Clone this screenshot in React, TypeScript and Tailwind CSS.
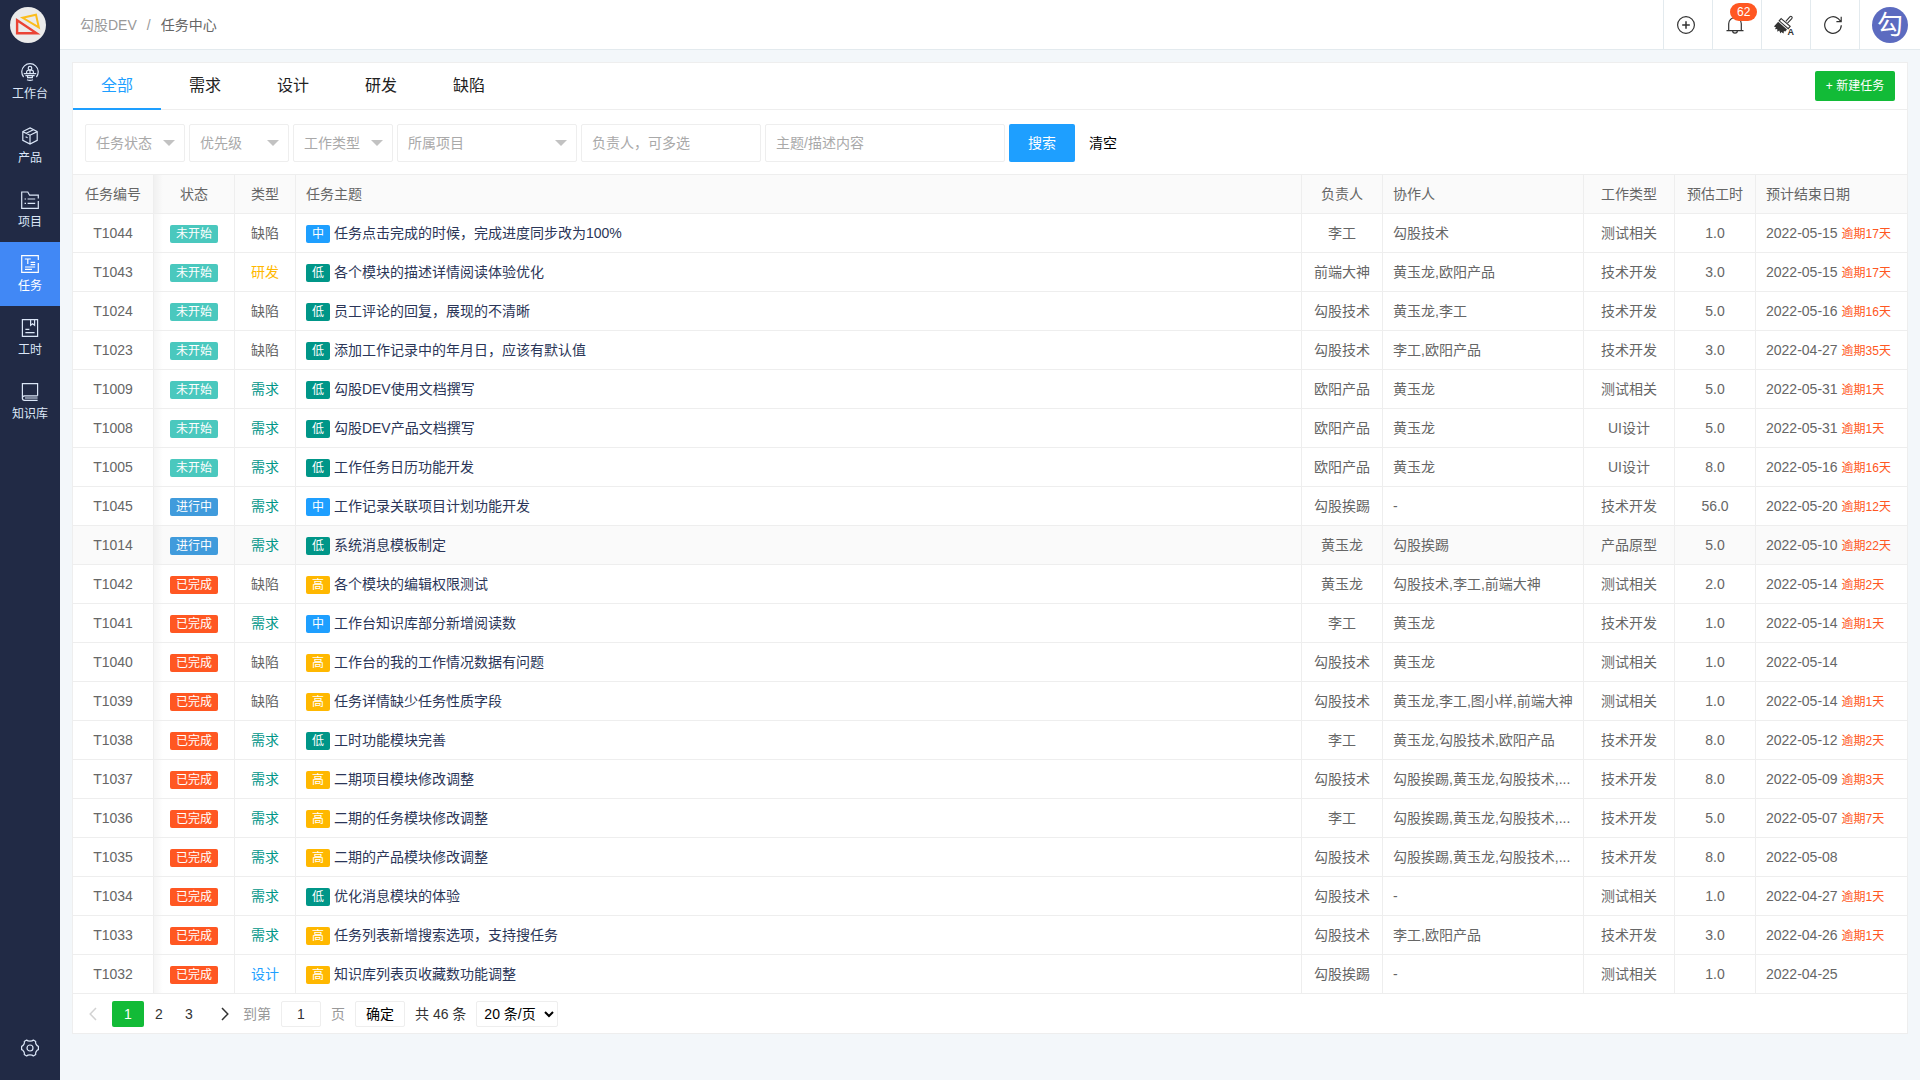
import React, { useState } from "react";

interface Task {
  id: string;
  status: string;
  type: string;
  level: string;
  title: string;
  owner: string;
  helpers: string;
  work: string;
  hours: string;
  date: string;
  overdue?: number;
}

const statusColor: Record<string, string> = {
  未开始: "bg-[#4ac8be]",
  进行中: "bg-[#409bdc]",
  已完成: "bg-[#ff5722]",
};

const levelColor: Record<string, string> = {
  低: "bg-[#009688]",
  中: "bg-[#1e9fff]",
  高: "bg-[#ffb800]",
};

const typeColor: Record<string, string> = {
  缺陷: "text-[#666]",
  研发: "text-[#ffb800]",
  需求: "text-[#009688]",
  设计: "text-[#1e9fff]",
};

const tasks: Task[] = [
  { id: "T1044", status: "未开始", type: "缺陷", level: "中", title: "任务点击完成的时候，完成进度同步改为100%", owner: "李工", helpers: "勾股技术", work: "测试相关", hours: "1.0", date: "2022-05-15", overdue: 17 },
  { id: "T1043", status: "未开始", type: "研发", level: "低", title: "各个模块的描述详情阅读体验优化", owner: "前端大神", helpers: "黄玉龙,欧阳产品", work: "技术开发", hours: "3.0", date: "2022-05-15", overdue: 17 },
  { id: "T1024", status: "未开始", type: "缺陷", level: "低", title: "员工评论的回复，展现的不清晰", owner: "勾股技术", helpers: "黄玉龙,李工", work: "技术开发", hours: "5.0", date: "2022-05-16", overdue: 16 },
  { id: "T1023", status: "未开始", type: "缺陷", level: "低", title: "添加工作记录中的年月日，应该有默认值", owner: "勾股技术", helpers: "李工,欧阳产品", work: "技术开发", hours: "3.0", date: "2022-04-27", overdue: 35 },
  { id: "T1009", status: "未开始", type: "需求", level: "低", title: "勾股DEV使用文档撰写", owner: "欧阳产品", helpers: "黄玉龙", work: "测试相关", hours: "5.0", date: "2022-05-31", overdue: 1 },
  { id: "T1008", status: "未开始", type: "需求", level: "低", title: "勾股DEV产品文档撰写", owner: "欧阳产品", helpers: "黄玉龙", work: "UI设计", hours: "5.0", date: "2022-05-31", overdue: 1 },
  { id: "T1005", status: "未开始", type: "需求", level: "低", title: "工作任务日历功能开发", owner: "欧阳产品", helpers: "黄玉龙", work: "UI设计", hours: "8.0", date: "2022-05-16", overdue: 16 },
  { id: "T1045", status: "进行中", type: "需求", level: "中", title: "工作记录关联项目计划功能开发", owner: "勾股挨踢", helpers: "-", work: "技术开发", hours: "56.0", date: "2022-05-20", overdue: 12 },
  { id: "T1014", status: "进行中", type: "需求", level: "低", title: "系统消息模板制定", owner: "黄玉龙", helpers: "勾股挨踢", work: "产品原型", hours: "5.0", date: "2022-05-10", overdue: 22 },
  { id: "T1042", status: "已完成", type: "缺陷", level: "高", title: "各个模块的编辑权限测试", owner: "黄玉龙", helpers: "勾股技术,李工,前端大神", work: "测试相关", hours: "2.0", date: "2022-05-14", overdue: 2 },
  { id: "T1041", status: "已完成", type: "需求", level: "中", title: "工作台知识库部分新增阅读数", owner: "李工", helpers: "黄玉龙", work: "技术开发", hours: "1.0", date: "2022-05-14", overdue: 1 },
  { id: "T1040", status: "已完成", type: "缺陷", level: "高", title: "工作台的我的工作情况数据有问题", owner: "勾股技术", helpers: "黄玉龙", work: "测试相关", hours: "1.0", date: "2022-05-14" },
  { id: "T1039", status: "已完成", type: "缺陷", level: "高", title: "任务详情缺少任务性质字段", owner: "勾股技术", helpers: "黄玉龙,李工,图小样,前端大神", work: "测试相关", hours: "1.0", date: "2022-05-14", overdue: 1 },
  { id: "T1038", status: "已完成", type: "需求", level: "低", title: "工时功能模块完善", owner: "李工", helpers: "黄玉龙,勾股技术,欧阳产品", work: "技术开发", hours: "8.0", date: "2022-05-12", overdue: 2 },
  { id: "T1037", status: "已完成", type: "需求", level: "高", title: "二期项目模块修改调整", owner: "勾股技术", helpers: "勾股挨踢,黄玉龙,勾股技术,...", work: "技术开发", hours: "8.0", date: "2022-05-09", overdue: 3 },
  { id: "T1036", status: "已完成", type: "需求", level: "高", title: "二期的任务模块修改调整", owner: "李工", helpers: "勾股挨踢,黄玉龙,勾股技术,...", work: "技术开发", hours: "5.0", date: "2022-05-07", overdue: 7 },
  { id: "T1035", status: "已完成", type: "需求", level: "高", title: "二期的产品模块修改调整", owner: "勾股技术", helpers: "勾股挨踢,黄玉龙,勾股技术,...", work: "技术开发", hours: "8.0", date: "2022-05-08" },
  { id: "T1034", status: "已完成", type: "需求", level: "低", title: "优化消息模块的体验", owner: "勾股技术", helpers: "-", work: "测试相关", hours: "1.0", date: "2022-04-27", overdue: 1 },
  { id: "T1033", status: "已完成", type: "需求", level: "高", title: "任务列表新增搜索选项，支持搜任务", owner: "勾股技术", helpers: "李工,欧阳产品", work: "技术开发", hours: "3.0", date: "2022-04-26", overdue: 1 },
  { id: "T1032", status: "已完成", type: "设计", level: "高", title: "知识库列表页收藏数功能调整", owner: "勾股挨踢", helpers: "-", work: "测试相关", hours: "1.0", date: "2022-04-25" },
];

const Icon = ({ children }: { children: React.ReactNode }) => (
  <svg
    width="18"
    height="18"
    viewBox="0 0 18 18"
    fill="none"
    stroke="currentColor"
    strokeWidth="1.2"
    aria-hidden="true"
  >
    {children}
  </svg>
);

const menu = [
  {
    name: "工作台",
    icon: (
      <Icon>
        <path d="M2.6 14A8.2 8.2 0 1 1 15.4 14M6 16.7a8.2 8.2 0 0 0 6 0" />
        <circle cx="9" cy="5.2" r="1.8" />
        <path d="M5.6 10V9.2c0-1.2 1-2 2-2h2.8c1 0 2 .8 2 2V10M2.8 10.6h12.4M4.4 12.6h9.2M6.6 12.6v2h4.8v-2M9 7.4v3" />
      </Icon>
    ),
  },
  {
    name: "产品",
    icon: (
      <Icon>
        <path d="M9 .9l7.2 3.6v8.8L9 17.1l-7.2-3.8V4.5L9 .9zM1.8 4.6L9 8.2l7.2-3.6M9 8.2v8.8M5.2 6.3l7.2-3.6M4.6 9.8l2 1" />
      </Icon>
    ),
  },
  {
    name: "项目",
    icon: (
      <Icon>
        <path d="M17.3 7.5V4.2H8.6L6.8 1H.7v16.3h16.6V10M3.6 8h1.4M6.6 8h7.6M3.6 12.4h1.4M6.6 12.4h7.6" />
      </Icon>
    ),
  },
  {
    name: "任务",
    icon: (
      <Icon>
        <path d="M17.3 5V.7H.7v16.6h16.6V8M3.8 4h6M6.8 4v5M9.6 7.4h4.6M9.6 9.6h4.6M4 12h10.2M4 14.4h7" />
      </Icon>
    ),
  },
  {
    name: "工时",
    icon: (
      <Icon>
        <path d="M1.4.7h15.2v16.6H1.4zM9.6.9v5.4l2-1.6 2 1.6V.9M4.4 10.4h4M4.4 13.6h9.2" />
      </Icon>
    ),
  },
  {
    name: "知识库",
    icon: (
      <Icon>
        <path d="M16.6 12.8V.7H1.4v14.4M16.6 12.8H3.6a2.2 2.2 0 0 0 0 4.5h13M4 15h12.6" />
      </Icon>
    ),
  },
];

const tabs = ["全部", "需求", "设计", "研发", "缺陷"];

const columns = [
  { name: "任务编号", width: "w-[81px]", center: true },
  { name: "状态", width: "w-[81px]", center: true },
  { name: "类型", width: "w-[61px]", center: true },
  { name: "任务主题", width: "", center: false },
  { name: "负责人", width: "w-[81px]", center: true },
  { name: "协作人", width: "w-[201px]", center: false },
  { name: "工作类型", width: "w-[91px]", center: true },
  { name: "预估工时", width: "w-[81px]", center: true },
  { name: "预计结束日期", width: "w-[151px]", center: false },
];

const pinShadow =
  "bg-[linear-gradient(to_right,rgba(0,0,0,0.04),transparent_9px)]";

const SideMenu = () => (
  <aside className="sticky top-0 flex h-screen w-[60px] shrink-0 flex-col bg-[#212a45] text-[#dbe6f7]">
    <a href="#" aria-label="首页" className="flex h-[50px] items-center pl-2.5">
      <svg width="36" height="36" viewBox="0 0 36 36" fill="none">
        <circle cx="18" cy="18" r="18" fill="#ebebeb" />
        <path d="M12.6 10.8L26 7.8l2.8 12.6z" stroke="#fbbc1c" strokeWidth="2" />
        <path d="M7.1 13.2v13.1h19.5z" stroke="#ea4335" strokeWidth="2.4" />
      </svg>
    </a>
    <nav>
      {menu.map((item) => (
        <a
          key={item.name}
          href="#"
          className={
            "flex h-16 flex-col items-center gap-1 pt-[13px] text-xs leading-[18px] " +
            (item.name === "任务" ? "bg-[#4188f5] text-white" : "")
          }
        >
          {item.icon}
          {item.name}
        </a>
      ))}
    </nav>
    <button
      type="button"
      aria-label="设置"
      className="mt-auto flex h-16 items-center justify-center"
    >
      <Icon>
        <path
          strokeLinejoin="round"
          d="M5.6 1C6.8 2.4 11.2 2.4 12.4 1L14.7 2.4C14.1 4.2 15.6 6.8 17.4 7.3V10.7C15.6 11.2 14.1 13.8 14.7 15.6L12.4 17C11.2 15.6 6.8 15.6 5.6 17L3.3 15.6C3.9 13.8 2.4 11.2.6 10.7V7.3C2.4 6.8 3.9 4.2 3.3 2.4Z"
        />
        <circle cx="9" cy="9" r="3" />
      </Icon>
    </button>
  </aside>
);

const headBtn =
  "relative flex w-[49px] items-center justify-center border-l border-[#e3eaee] pr-1";

const TopBar = () => (
  <header className="flex h-[50px] border-b border-[#e3eaee] bg-white text-[#333]">
    <nav className="flex flex-1 items-center gap-2.5 pl-5 text-[#999]">
      <a href="#">勾股DEV</a>
      <span>/</span>
      <a href="#" className="text-[#666]">
        任务中心
      </a>
    </nav>
    <button type="button" aria-label="新增" className={headBtn}>
      <Icon>
        <circle cx="9" cy="9" r="8.4" />
        <path d="M9 5.2v7.6M5.2 9h7.6" strokeWidth="1.5" />
      </Icon>
    </button>
    <button type="button" aria-label="消息" className={headBtn}>
      <Icon>
        <path d="M2.7 14.5V7.8a6.3 6.3 0 0 1 12.6 0v6.7M.5 14.6h17M6.6 14.8a2.4 2.4 0 0 0 4.8 0" />
      </Icon>
      <span className="absolute top-[3px] left-[17px] h-[18px] rounded-full bg-[#ff5722] px-[7px] text-xs leading-[18px] text-white">
        62
      </span>
    </button>
    <button type="button" aria-label="主题" className={headBtn}>
      <svg width="22" height="20" viewBox="0 0 22 20" fill="none" stroke="#333" aria-hidden="true">
        <path d="M12.8 6.4l4-4.6a1.3 1.3 0 0 1 2 1.8l-4.3 4.6" strokeWidth="1.1" />
        <path d="M8.2 3.6l9 7.8-2 2.3-9-7.9z" fill="#fff" strokeWidth="1.1" />
        <path d="M5.2 6.8l8.8 7.7-1.7 2-1.4-.6-.3 2.5-2.3-1.5-.8 1.5-1.3-2.9-1.8 1.2-.2-2.6-2.2.1.9-2-2-.8z" fill="#333" stroke="none" />
        <text x="14.5" y="19.5" fill="#333" stroke="none" className="text-[9px] font-bold">
          A
        </text>
      </svg>
    </button>
    <button type="button" aria-label="刷新" className={headBtn}>
      <Icon>
        <path d="M17.3 9.2A8.3 8.3 0 1 1 14 2.4l2.8 2.9M17.2.8v4.8h-4.8" />
      </Icon>
    </button>
    <button
      type="button"
      className="flex w-[61px] items-center border-l border-[#e3eaee] pl-3"
    >
      <span className="flex size-9 items-center justify-center rounded-full bg-[#5c6bc0] text-[26px] leading-9 text-white">
        勾
      </span>
    </button>
  </header>
);

interface FilterSelectProps {
  label: string;
  width: string;
}

const FilterSelect = ({ label, width }: FilterSelectProps) => (
  <div className={"relative " + width}>
    <select
      aria-label={label}
      className="h-[38px] w-full appearance-none rounded-xs border border-[#eee] bg-white pl-2.5 text-[#a9a9a9]"
    >
      <option>{label}</option>
    </select>
    <span className="pointer-events-none absolute top-4 right-2.5 border-x-6 border-t-6 border-x-transparent border-t-[#c2c2c2]" />
  </div>
);

const FilterBar = () => (
  <form
    className="flex items-center gap-1 px-3 pt-[14px] pb-3"
    onSubmit={(e) => e.preventDefault()}
  >
    <FilterSelect label="任务状态" width="w-[100px]" />
    <FilterSelect label="优先级" width="w-[100px]" />
    <FilterSelect label="工作类型" width="w-[100px]" />
    <FilterSelect label="所属项目" width="w-[180px]" />
    <input
      aria-label="负责人"
      placeholder="负责人，可多选"
      className="h-[38px] w-[180px] rounded-xs border border-[#eee] pl-2.5 placeholder:text-[#a9a9a9]"
    />
    <input
      aria-label="关键字"
      placeholder="主题/描述内容"
      className="h-[38px] w-[240px] rounded-xs border border-[#eee] pl-2.5 placeholder:text-[#a9a9a9]"
    />
    <button
      type="submit"
      className="h-[38px] w-[66px] rounded-xs bg-[#1e9fff] text-white"
    >
      搜索
    </button>
    <button type="reset" className="px-2.5 text-black">
      清空
    </button>
  </form>
);

const badge =
  "inline-block h-[18px] rounded-xs px-1.5 text-xs leading-[18px] text-white";

const TaskTable = () => (
  <table className="w-full table-fixed border-separate border-spacing-0 border-t border-[#eee] text-[#666]">
    <thead>
      <tr className="bg-[#fafafa]">
        {columns.map((col, i) => (
          <th
            key={col.name}
            className={
              "h-[39px] border-b border-[#eee] font-normal not-last:border-r " +
              (i === 1 ? pinShadow + " " : "") +
              (col.center ? "text-center " : "pl-2.5 text-left ") +
              col.width
            }
          >
            {col.name}
          </th>
        ))}
      </tr>
    </thead>
    <tbody>
      {tasks.map((task) => {
        const cell = "h-[39px] border-r border-b border-[#eee] text-center";
        return (
          <tr
            key={task.id}
            className={task.id === "T1014" ? "bg-[#fafafa]" : "hover:bg-[#fafafa]"}
          >
            <td className={cell}>{task.id}</td>
            <td className={cell + " " + pinShadow}>
              <span className={badge + " " + statusColor[task.status]}>
                {task.status}
              </span>
            </td>
            <td className={cell + " " + typeColor[task.type]}>{task.type}</td>
            <td className="truncate border-r border-b border-[#eee] px-2.5">
              <span className={badge + " " + levelColor[task.level]}>
                {task.level}
              </span>{" "}
              <a href="#" className="text-[#2b3658]">
                {task.title}
              </a>
            </td>
            <td className={cell}>{task.owner}</td>
            <td className="truncate border-r border-b border-[#eee] px-2.5">
              {task.helpers}
            </td>
            <td className={cell}>{task.work}</td>
            <td className={cell}>{task.hours}</td>
            <td className="border-b border-[#eee] pl-2.5 whitespace-nowrap">
              {task.date}{" "}
              {task.overdue && (
                <span className="text-xs text-[#ff5722]">
                  逾期{task.overdue}天
                </span>
              )}
            </td>
          </tr>
        );
      })}
    </tbody>
  </table>
);

const Pager = () => {
  const [page, setPage] = useState(1);

  return (
    <div className="flex items-center gap-2.5 px-[7px] pt-[7px] pb-1.5 text-[#333]">
      <div className="flex h-[26px] items-center">
        <button
          type="button"
          aria-label="上一页"
          className="flex w-8 justify-center pr-1.5 text-[#d2d2d2]"
        >
          <svg width="8" height="14" viewBox="0 0 8 14" fill="none" stroke="currentColor" strokeWidth="1.5">
            <path d="M7 1L1.2 7 7 13" />
          </svg>
        </button>
        {[1, 2, 3].map((n) => (
          <button
            key={n}
            type="button"
            onClick={() => setPage(n)}
            className={
              n === page
                ? "h-[26px] w-8 rounded-xs bg-[#12bb37] text-white"
                : "h-[26px] w-[30px]"
            }
          >
            {n}
          </button>
        ))}
        <button
          type="button"
          aria-label="下一页"
          className="flex w-[29px] justify-end pr-1"
        >
          <svg width="8" height="14" viewBox="0 0 8 14" fill="none" stroke="currentColor" strokeWidth="1.5">
            <path d="M1 1l5.8 6L1 13" />
          </svg>
        </button>
      </div>
      <label htmlFor="page" className="text-[#999]">
        到第
      </label>
      <input
        id="page"
        defaultValue="1"
        className="h-[26px] w-10 rounded-xs border border-[#eee] text-center"
      />
      <span className="text-[#999]">页</span>
      <button
        type="button"
        className="h-[26px] w-[50px] rounded-xs border border-[#eee] text-black"
      >
        确定
      </button>
      <span>共 46 条</span>
      <select
        aria-label="每页条数"
        className="h-[26px] w-[82px] rounded-xs border border-[#eee] bg-white pl-[3px] text-black"
      >
        <option>20 条/页</option>
        <option>50 条/页</option>
      </select>
    </div>
  );
};

export default function App() {
  const [tab, setTab] = useState("全部");

  return (
    <div className="flex min-h-screen bg-[#f3f7fa] font-['Liberation_Sans','Noto_Sans_CJK_SC',sans-serif] text-sm">
      <SideMenu />
      <div className="min-w-0 flex-1">
        <TopBar />
        <main className="m-3 border border-[#eee] bg-white">
          <div className="flex h-[47px] justify-between border-b border-[#eee]">
            <div className="flex text-base">
              {tabs.map((name) => (
                <button
                  key={name}
                  type="button"
                  onClick={() => setTab(name)}
                  className={
                    "-mb-px w-[88px] border-b-2 " +
                    (name === tab
                      ? "border-[#1e9fff] text-[#1e9fff]"
                      : "border-transparent text-[#222]")
                  }
                >
                  {name}
                </button>
              ))}
            </div>
            <button
              type="button"
              className="mt-2 mr-3 h-[30px] w-20 rounded-xs bg-[#12bb37] text-xs text-white"
            >
              + 新建任务
            </button>
          </div>
          <FilterBar />
          <TaskTable />
          <Pager />
        </main>
      </div>
    </div>
  );
}
